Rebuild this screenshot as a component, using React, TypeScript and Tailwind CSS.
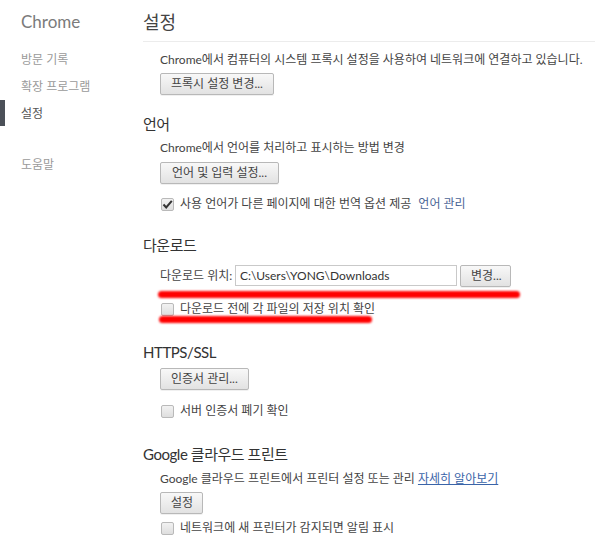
import React from 'react';

const FONT = "font-['Segoe_UI','Lato','Noto_Sans_CJK_KR',sans-serif]";

const Button: React.FC<{ label: string; className?: string }> = ({ label, className = '' }) => (
  <button
    className={`h-[22px] whitespace-nowrap px-[10px] rounded-[2px] border border-[#b8b8b8] bg-gradient-to-b from-[#f8f8f8] to-[#e2e2e2] text-[12px] leading-none text-[#444] shadow-[0_1px_0_rgba(0,0,0,0.06)] ${className}`}
  >
    {label}
  </button>
);

const Checkbox: React.FC<{ checked?: boolean; label: React.ReactNode; className?: string }> = ({
  checked,
  label,
  className = '',
}) => (
  <label className={`flex h-[18px] items-center gap-[6px] pl-px text-[12px] text-[#444] ${className}`}>
    <span className="relative h-[13px] w-[13px] rounded-[2px] border border-[#b9b9b9] bg-gradient-to-b from-[#f2f2f2] to-[#dedede]">
      {checked && (
        <svg viewBox="0 0 13 13" className="absolute -left-px -top-px h-[13px] w-[13px]">
          <path d="M2.5 6.5 L5.2 9.5 L10.8 2.8" fill="none" stroke="#333" strokeWidth="2" />
        </svg>
      )}
    </span>
    <span>{label}</span>
  </label>
);

const SectionTitle: React.FC<{ children: React.ReactNode; className?: string }> = ({ children, className = '' }) => (
  <h2 className={`text-[15px] leading-[20px] tracking-[-0.03em] text-[#333] font-normal ${className}`}>{children}</h2>
);

export default function App() {
  return (
    <div className={`flex h-[558px] w-[595px] overflow-hidden bg-white ${FONT}`}>
      {/* sidebar */}
      <aside className="w-[143px] shrink-0">
        <div className="pl-[21px] pt-[10px] text-[17px] leading-[24px] text-[#7b7b7b]">Chrome</div>
        <nav className="mt-[17px] text-[12px] text-[#9a9a9a]">
          <div className="pl-[21px] leading-[18px]">방문 기록</div>
          <div className="mt-[9px] pl-[21px] leading-[18px]">확장 프로그램</div>
          <div className="relative mt-[9px] pl-[21px] leading-[18px] text-[#555]">
            <span className="absolute left-0 top-[-5px] h-[26px] w-[5px] bg-[#4b5058]" />
            설정
          </div>
          <div className="mt-[33px] pl-[21px] leading-[18px]">도움말</div>
        </nav>
      </aside>

      {/* main */}
      <main className="flex-1 text-[12px] text-[#444]">
        <header className="h-[42px] border-b border-[#ececec] pt-[10px]">
          <h1 className="text-[18px] leading-[24px] text-[#444] font-normal">설정</h1>
        </header>

        <div className="pl-[17px]">
          <p className="mt-[9px] whitespace-nowrap leading-[18px]">
            Chrome에서 컴퓨터의 시스템 프록시 설정을 사용하여 네트워크에 연결하고 있습니다.
          </p>
          <Button label="프록시 설정 변경..." className="mt-[4px]" />
        </div>

        <SectionTitle className="mt-[19px]">언어</SectionTitle>
        <div className="pl-[17px]">
          <p className="mt-[5px] leading-[18px]">Chrome에서 언어를 처리하고 표시하는 방법 변경</p>
          <Button label="언어 및 입력 설정..." className="mt-[5px] px-[11px]" />
          <Checkbox
            checked
            className="mt-[11px]"
            label={
              <>
                사용 언어가 다른 페이지에 대한 번역 옵션 제공 <span className="ml-[4px] text-[#4a6596]">언어 관리</span>
              </>
            }
          />
        </div>

        <SectionTitle className="mt-[22px]">다운로드</SectionTitle>
        <div className="pl-[17px]">
          <div className="relative mt-[10px] flex h-[21px] items-center">
            <span className="w-[75px] shrink-0 whitespace-nowrap">다운로드 위치:</span>
            <div className="flex h-[21px] w-[222px] items-center border border-[#c9c9c9] bg-white pl-[4px] text-[#333]">
              C:\Users\YONG\Downloads
            </div>
            <Button label="변경..." className="ml-[3px] h-[21px] w-[51px] px-0" />
            <span className="absolute left-[-2px] top-[26px] h-[7px] w-[362px] rounded-full bg-[#f00] blur-[1px]" />
          </div>
          <div className="relative">
            <Checkbox className="mt-[14px]" label="다운로드 전에 각 파일의 저장 위치 확인" />
            <span className="absolute left-[-1px] top-[16px] h-[7px] w-[213px] rounded-full bg-[#f00] blur-[1px]" />
          </div>
        </div>

        <SectionTitle className="mt-[24px]">HTTPS/SSL</SectionTitle>
        <div className="pl-[17px]">
          <Button label="인증서 관리..." className="mt-[6px] h-[21px]" />
          <Checkbox className="mt-[12px]" label="서버 인증서 폐기 확인" />
        </div>

        <SectionTitle className="mt-[24px]">Google 클라우드 프린트</SectionTitle>
        <div className="pl-[17px]">
          <p className="mt-[6px] leading-[18px]">
            Google 클라우드 프린트에서 프린터 설정 또는 관리{' '}
            <a className="text-[#3a64a8] underline">자세히 알아보기</a>
          </p>
          <Button label="설정" className="mt-[4px] w-[43px] px-0" />
          <Checkbox className="mt-[5px]" label="네트워크에 새 프린터가 감지되면 알림 표시" />
        </div>
      </main>
    </div>
  );
}
